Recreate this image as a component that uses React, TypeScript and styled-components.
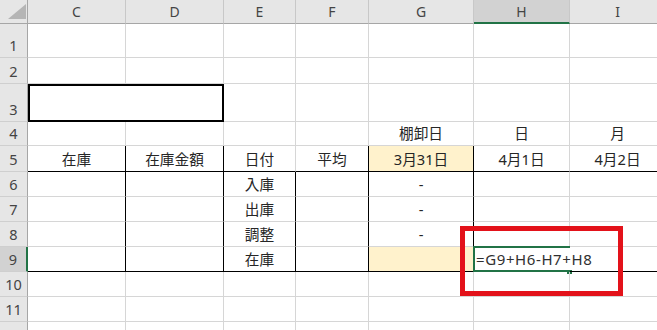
import React from 'react';
import styled, { createGlobalStyle } from 'styled-components';

const Global = createGlobalStyle`
  html, body { margin: 0; padding: 0; background: #ffffff; }
  body { font-family: "Noto Sans", "Noto Sans CJK JP", sans-serif; }
`;

type Edge = 'grid' | 'black' | 'none';
const edgeColor: Record<Edge, string> = { grid: '#d6d6d6', black: '#000000', none: 'transparent' };

const COLS = [
  { key: 'C', w: 98 },
  { key: 'D', w: 98 },
  { key: 'E', w: 72 },
  { key: 'F', w: 73 },
  { key: 'G', w: 105 },
  { key: 'H', w: 96 },
  { key: 'I', w: 96 },
];
const ROW_H = [34, 26, 38, 24, 26, 25, 25, 25, 25, 25, 25, 25];

const GREEN = '#217346';
const YELLOW = '#fff2cc';

const Sheet = styled.div`
  position: relative;
  display: grid;
  grid-template-columns: 28px ${COLS.map((c) => `${c.w}px`).join(' ')};
  grid-template-rows: 24px ${ROW_H.map((h) => `${h}px`).join(' ')};
  width: 657px;
  height: 330px;
  overflow: hidden;
  font-family: "Noto Sans", "Noto Sans CJK JP", sans-serif;
  font-size: 14.67px;
  color: #262626;
`;

const Corner = styled.div`
  box-sizing: border-box;
  position: relative;
  background: #e6e6e6;
  border-right: 1px solid #a6a6a6;
  border-bottom: 1px solid #a6a6a6;
`;

const CornerTriangle = styled.svg`
  position: absolute;
  left: 0;
  top: 0;
`;

const ColHeader = styled.div<{ $sel?: boolean }>`
  box-sizing: border-box;
  display: flex;
  align-items: center;
  justify-content: center;
  background: ${(p) => (p.$sel ? '#d2d2d2' : '#e6e6e6')};
  border-right: 1px solid #c8c8c8;
  border-bottom: ${(p) => (p.$sel ? `2px solid ${GREEN}` : '1px solid #a6a6a6')};
  color: #444444;
  font-size: 14px;
  padding-top: ${(p) => (p.$sel ? '1px' : '0')};
`;

const RowHeader = styled.div<{ $sel?: boolean }>`
  box-sizing: border-box;
  display: flex;
  align-items: flex-end;
  justify-content: center;
  background: ${(p) => (p.$sel ? '#d2d2d2' : '#e6e6e6')};
  border-right: ${(p) => (p.$sel ? `2px solid ${GREEN}` : '1px solid #a6a6a6')};
  border-bottom: 1px solid #cfcfcf;
  color: #444444;
  font-size: 14.5px;
  line-height: 20px;
  padding-bottom: 2px;
`;

const Cell = styled.div<{ $r: Edge; $b: Edge; $fill?: string; $start?: boolean }>`
  box-sizing: border-box;
  position: relative;
  display: flex;
  align-items: flex-end;
  justify-content: ${(p) => (p.$start ? 'flex-start' : 'center')};
  padding: 0 ${(p) => (p.$start ? '2px' : '3px')} 2px;
  border-right: 1px solid ${(p) => edgeColor[p.$r]};
  border-bottom: 1px solid ${(p) => edgeColor[p.$b]};
  background: ${(p) => p.$fill ?? 'transparent'};
  white-space: nowrap;
  line-height: 20px;
`;

const BoxCell = styled.div`
  box-sizing: border-box;
  grid-column: span 2;
  border: 2px solid #000000;
`;

const Selection = styled.span`
  position: absolute;
  left: -1px;
  top: -1px;
  right: -1px;
  bottom: -1px;
  border: 2px solid ${GREEN};
  border-right: none;
  pointer-events: none;
`;

const FillHandle = styled.span`
  position: absolute;
  right: -3px;
  bottom: -3px;
  width: 5px;
  height: 4px;
  background: ${GREEN};
`;

const FormulaText = styled.span`
  position: relative;
  z-index: 2;
  font-size: 15px;
  letter-spacing: 0.6px;
  color: #303030;
`;

const Annotation = styled.div`
  position: absolute;
  left: 460px;
  top: 226px;
  width: 163px;
  height: 70px;
  box-sizing: border-box;
  border: 5px solid #e3121a;
  z-index: 5;
  pointer-events: none;
`;

const TEXT: Record<string, string> = {
  G4: '棚卸日',
  H4: '日',
  I4: '月',
  C5: '在庫',
  D5: '在庫金額',
  E5: '日付',
  F5: '平均',
  G5: '3月31日',
  H5: '4月1日',
  I5: '4月2日',
  E6: '入庫',
  E7: '出庫',
  E8: '調整',
  E9: '在庫',
  G6: '-',
  G7: '-',
  G8: '-',
};

function rightEdge(row: number, col: string): Edge {
  if (row >= 5 && row <= 9) {
    if (col === 'C' || col === 'D' || col === 'F' || col === 'G') return 'black';
    if (col === 'E' && row >= 6) return 'black';
    if (col === 'H' && row === 9) return 'none';
  }
  return 'grid';
}

function bottomEdge(row: number): Edge {
  return row === 5 || row === 9 ? 'black' : 'grid';
}

function fillOf(row: number, col: string): string | undefined {
  if (col === 'G' && (row === 5 || row === 9)) return YELLOW;
  return undefined;
}

export default function App() {
  const rows = ROW_H.map((_, i) => i + 1);
  return (
    <>
      <Global />
      <Sheet>
        <Corner>
          <CornerTriangle width="28" height="24" viewBox="0 0 28 24">
            <polygon points="8,19 26,19 26,4" fill="#b5b5b5" />
          </CornerTriangle>
        </Corner>
        {COLS.map((c) => (
          <ColHeader key={c.key} $sel={c.key === 'H'}>
            {c.key}
          </ColHeader>
        ))}
        {rows.map((r) => (
          <React.Fragment key={r}>
            <RowHeader $sel={r === 9}>{r}</RowHeader>
            {r === 3 ? (
              <>
                <BoxCell />
                {COLS.slice(2).map((c) => (
                  <Cell key={c.key} $r="grid" $b="grid" />
                ))}
              </>
            ) : (
              COLS.map((c) => {
                const id = `${c.key}${r}`;
                const active = id === 'H9';
                return (
                  <Cell
                    key={id}
                    $r={rightEdge(r, c.key)}
                    $b={bottomEdge(r)}
                    $fill={fillOf(r, c.key)}
                    $start={active}
                  >
                    {active ? (
                      <>
                        <FormulaText>=G9+H6-H7+H8</FormulaText>
                        <Selection />
                        <FillHandle />
                      </>
                    ) : (
                      TEXT[id] ?? null
                    )}
                  </Cell>
                );
              })
            )}
          </React.Fragment>
        ))}
        <Annotation />
      </Sheet>
    </>
  );
}
